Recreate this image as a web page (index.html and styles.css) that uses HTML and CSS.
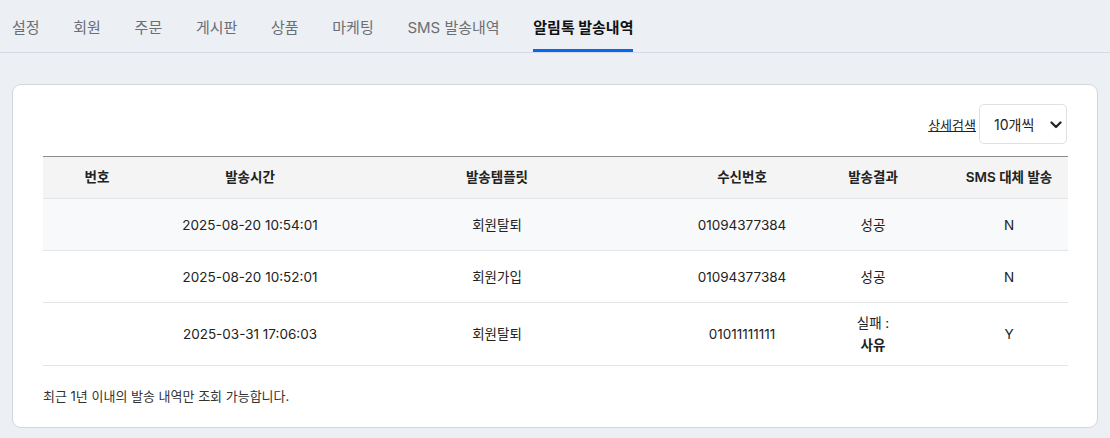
FILE: index.html
```html
<!DOCTYPE html>
<html lang="ko">
<head>
<meta charset="utf-8">
<title>알림톡 발송내역</title>
<link rel="stylesheet" href="styles.css">
</head>
<body>
<nav class="tabs">
  <a class="tab">설정</a>
  <a class="tab">회원</a>
  <a class="tab">주문</a>
  <a class="tab">게시판</a>
  <a class="tab">상품</a>
  <a class="tab">마케팅</a>
  <a class="tab">SMS 발송내역</a>
  <a class="tab active">알림톡 발송내역</a>
</nav>
<main class="card">
  <div class="toolbar">
    <a class="detail-link">상세검색</a>
    <div class="select-wrap">
      <select class="select">
        <option>10개씩</option>
        <option>20개씩</option>
        <option>50개씩</option>
      </select>
      <svg class="chev" width="12" height="8" viewBox="0 0 12 8"><path d="M1.5 1.5 L6 6 L10.5 1.5" fill="none" stroke="#222" stroke-width="2.2" stroke-linecap="round" stroke-linejoin="round"/></svg>
    </div>
  </div>
  <table class="list">
    <colgroup>
      <col class="c1"><col class="c2"><col class="c3"><col class="c4"><col class="c5"><col class="c6">
    </colgroup>
    <thead>
      <tr><th>번호</th><th>발송시간</th><th>발송템플릿</th><th>수신번호</th><th class="res">발송결과</th><th>SMS 대체 발송</th></tr>
    </thead>
    <tbody>
      <tr class="hl"><td></td><td>2025-08-20 10:54:01</td><td>회원탈퇴</td><td>01094377384</td><td class="res">성공</td><td>N</td></tr>
      <tr><td></td><td>2025-08-20 10:52:01</td><td>회원가입</td><td>01094377384</td><td class="res">성공</td><td>N</td></tr>
      <tr><td></td><td>2025-03-31 17:06:03</td><td>회원탈퇴</td><td>01011111111</td><td class="res">실패 :<br><b>사유</b></td><td>Y</td></tr>
    </tbody>
  </table>
  <p class="note">최근 1년 이내의 발송 내역만 조회 가능합니다.</p>
</main>
</body>
</html>
```
FILE: styles.css
```css
* { box-sizing: border-box; }
html, body { margin: 0; padding: 0; }
body {
  background: #eceff3;
  font-family: Inter, "Noto Sans CJK KR", sans-serif;
  color: #222;
  font-size: 13.5px;
}
.tabs {
  display: flex;
  gap: 33.7px;
  padding: 0 12px;
  height: 53px;
  border-bottom: 1px solid #d6dbe2;
}
.tab {
  display: flex;
  align-items: center;
  font-size: 15px;
  color: #6b6e73;
  border-bottom: 3px solid transparent;
  padding-top: 3px;
  cursor: pointer;
}
.tab.active {
  color: #111;
  font-weight: 700;
  border-bottom-color: #0a66f0;
}
.card {
  margin: 31px 12px 0;
  background: #fff;
  border: 1px solid #d3d8df;
  border-radius: 9px;
  padding: 19px 30px 21px;
}
.toolbar {
  display: flex;
  justify-content: flex-end;
  align-items: center;
  gap: 3px;
  margin-bottom: 12px;
}
.detail-link {
  font-size: 13px;
  color: #222;
  text-decoration: underline;
  cursor: pointer;
}
.select-wrap { position: relative; }
.select {
  appearance: none;
  -webkit-appearance: none;
  width: 88px;
  height: 40px;
  border: 1px solid #dde1e6;
  border-radius: 5px;
  background: #fff;
  padding: 0 28px 0 14px;
  font-family: inherit;
  font-size: 14px;
  color: #222;
}
.chev {
  position: absolute;
  right: 5px;
  top: 17px;
  pointer-events: none;
}
.list {
  width: 100%;
  border-collapse: collapse;
  table-layout: fixed;
}
.c1 { width: 108px; }
.c2 { width: 198px; }
.c3 { width: 296px; }
.c4 { width: 194px; }
.c5 { width: 111px; }
.c6 { width: 118px; }
.list th {
  background: #f4f4f4;
  border-top: 1px solid #8c8c8c;
  border-bottom: 1px solid #e4e4e4;
  font-weight: 600;
  padding: 12px 8px;
  line-height: 17px;
  text-align: center;
  white-space: nowrap;
}
.list td {
  text-align: center;
  padding: 9px 8px;
  height: 52px;
  line-height: 22px;
  border-bottom: 1px solid #e4e4e4;
}
.list .res { padding-left: 0; padding-right: 43px; }
.list tr.hl td { background: #f8f9fa; }
.list td b { font-weight: 700; }
.note {
  margin: 20px 0 0;
  font-size: 13px;
  line-height: 20px;
  color: #333;
}
```
